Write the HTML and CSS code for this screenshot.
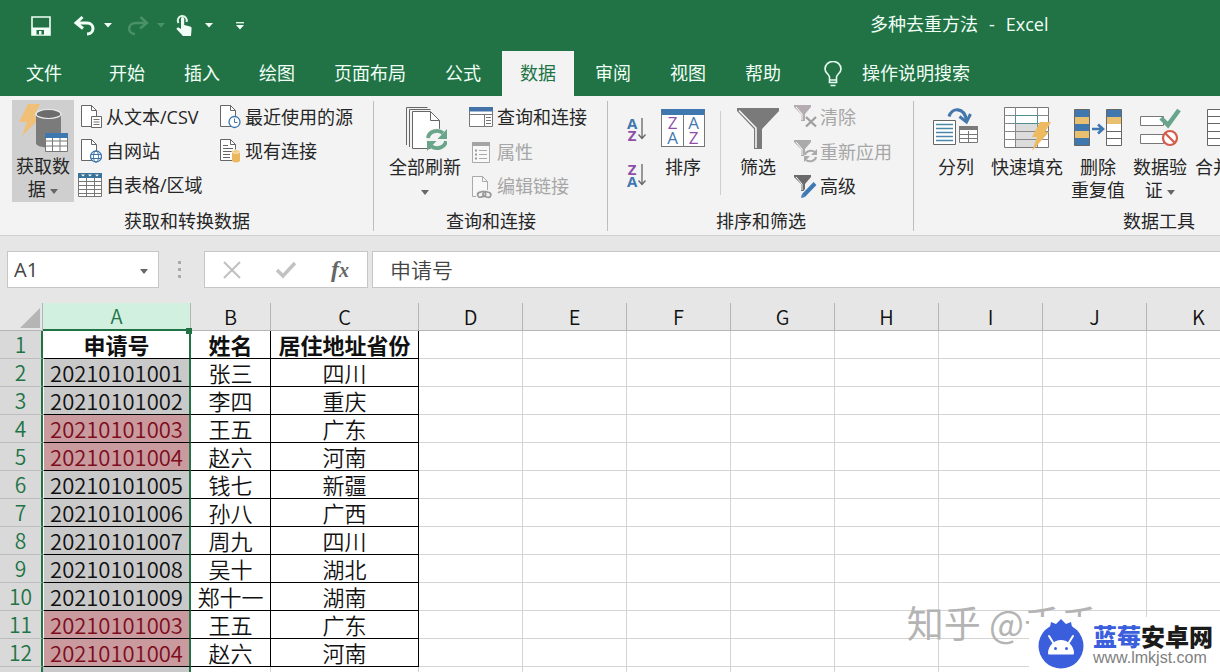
FILE: index.html
```html
<!DOCTYPE html>
<html lang="zh-CN">
<head>
<meta charset="utf-8">
<title>多种去重方法 - Excel</title>
<link rel="stylesheet" href="styles.css">
</head>
<body>
<div class="app">
  <header class="titlebar">
    <div class="quick">
      <button class="qbtn save" aria-label="保存"><svg width="20" height="20" viewBox="0 0 20 20"><path d="M1 1h18v18H1z" fill="none" stroke="#f1fff6" stroke-width="1.600"/><path d="M1 11.500h18V19H1z" fill="#f1fff6"/><path d="M5.500 14h7.500v4.500H5.500z" fill="#217346"/><path d="M8 15h2.500v3.500H8z" fill="#f1fff6"/></svg></button>
      <button class="qbtn undo" aria-label="撤消"><svg width="24" height="22" viewBox="0 0 24 22"><path d="M9.500 2L3 8l7 5.500M3.500 8H14c8 0 8 11 0 11" fill="none" stroke="#f1fff6" stroke-width="3"/></svg></button>
      <button class="qbtn drop" aria-label="撤消列表"><svg width="8" height="5" viewBox="0 0 8 5"><path d="M0 0h8L4 4.500z" fill="#f1fff6"/></svg></button>
      <button class="qbtn redo" aria-label="恢复" disabled><svg width="24" height="22" viewBox="0 0 24 22"><path d="M14.500 2L21 8l-7 5.500M20.500 8H10C1 8 1 19 9 19" fill="none" stroke="#4b9168" stroke-width="2.400"/></svg></button>
      <button class="qbtn drop" aria-label="恢复列表" disabled><svg width="8" height="5" viewBox="0 0 8 5"><path d="M0 0h8L4 4.500z" fill="#4b9168"/></svg></button>
      <button class="qbtn touch" aria-label="触摸/鼠标模式"><svg width="18" height="23" viewBox="0 0 18 23"><path d="M3.500 9A4.500 4.500 0 1 1 11.500 8" fill="none" stroke="#dff5e8" stroke-width="2"/><path d="M6 4.500a1.600 1.600 0 0 1 3.200 0V11l6 1.600q1.600.4 1.400 2L16 22H8L1.500 15q0-2 2-1.500L6 15z" fill="#f1fff6"/></svg></button>
      <button class="qbtn drop" aria-label="触摸选项"><svg width="8" height="5" viewBox="0 0 8 5"><path d="M0 0h8L4 4.500z" fill="#f1fff6"/></svg></button>
      <button class="qbtn more" aria-label="自定义快速访问工具栏"><svg width="8" height="8" viewBox="0 0 8 8"><path d="M0 .700h8" stroke="#f1fff6" stroke-width="1.300"/><path d="M0 3h8L4 7.500z" fill="#f1fff6"/></svg></button>
    </div>
    <h1 class="doc"><span>多种去重方法</span><span>-</span><span>Excel</span></h1>
  </header>

  <nav class="tabs">
    <button class="tab file">文件</button>
    <button class="tab">开始</button>
    <button class="tab">插入</button>
    <button class="tab">绘图</button>
    <button class="tab">页面布局</button>
    <button class="tab">公式</button>
    <button class="tab active">数据</button>
    <button class="tab">审阅</button>
    <button class="tab">视图</button>
    <button class="tab">帮助</button>
    <button class="tell"><svg width="18" height="26" viewBox="0 0 18 26"><path d="M5.500 19v-3C5 13 1 12 1 8a8 7.500 0 0 1 16 0c0 4-4 5-4.500 8v3zM5.500 19v2.500h7V19M6.500 24.500h5" fill="none" stroke="#e8fbf0" stroke-width="1.600"/></svg>操作说明搜索</button>
  </nav>

  <section class="ribbon">
    <div class="group g-get">
      <div class="tools">
        <button class="big pressed"><svg class="ico" width="50" height="50" viewBox="0 0 50 50"><path d="M10 0h12l-6 12h8L4 32l5-14H1z" fill="#f0bf78"/><path d="M18 10v29c0 6 25 6 25 0V10z" fill="#7b7b7b"/><ellipse cx="30.500" cy="10" rx="12.500" ry="4.500" fill="#6c6c6c" stroke="#eee" stroke-width="1.200"/><path d="M27.500 29.500h22v18h-22zM27.500 37h22M27.500 42h22M34.500 33v14M42 33v14" fill="#fff" stroke="#777"/><path d="M27 29h23v5H27z" fill="#3f78ae"/></svg><span>获取数<br>据 <i class="caret"></i></span></button>
        <div class="stack s1">
          <button class="small"><svg class="ico" width="24" height="26" viewBox="0 0 24 26"><path d="M3.500 1.500h10l5 5v16h-15z" fill="#fff" stroke="#666"/><path d="M13.500 1.500v5h5" fill="none" stroke="#666"/><path d="M13.500 12.500h10v11h-10z" fill="#fff" stroke="#666"/><path d="M15.500 15.500h6M15.500 18h6M15.500 20.500h6" stroke="#777"/></svg>从文本/CSV</button>
          <button class="small"><svg class="ico" width="24" height="26" viewBox="0 0 24 26"><path d="M3.500 1.500h10l5 5v16h-15z" fill="#fff" stroke="#666"/><path d="M13.500 1.500v5h5" fill="none" stroke="#666"/><circle cx="18" cy="18.500" r="5.500" fill="#fff" stroke="#3e75aa" stroke-width="1.300"/><ellipse cx="18" cy="18.500" rx="2.500" ry="5.500" fill="none" stroke="#3e75aa"/><path d="M13 16.500h10M13 20.500h10" stroke="#3e75aa"/></svg>自网站</button>
          <button class="small"><svg class="ico" width="24" height="26" viewBox="0 0 24 26"><path d="M.5 1.500h23v23H.5zM.5 9.500h23M.5 13.500h23M.5 17.500h23M.5 21.500h23M8.500 5v19M16.500 5v19" fill="#fff" stroke="#777"/><path d="M0 1h24v5H0z" fill="#39739a"/><path d="M3 2.500h4l-2 2zM10 2.500h4l-2 2zM17 2.500h4l-2 2z" fill="#fff"/></svg>自表格/区域</button>
        </div>
        <div class="stack">
          <button class="small"><svg class="ico" width="24" height="26" viewBox="0 0 24 26"><path d="M2.500 1.500h10l5 5v16h-15z" fill="#fff" stroke="#666"/><path d="M12.500 1.500v5h5" fill="none" stroke="#666"/><circle cx="16.500" cy="18" r="5.500" fill="#fff" stroke="#3e75aa" stroke-width="1.300"/><path d="M16.500 14.500v4h3" fill="none" stroke="#3e75aa"/></svg>最近使用的源</button>
          <button class="small"><svg class="ico" width="24" height="26" viewBox="0 0 24 26"><path d="M2.500 1.500h10l5 5v16h-15z" fill="#fff" stroke="#666"/><path d="M12.500 1.500v5h5M5 7.500h5M5 10.500h10M5 13.500h9M5 16.500h7M5 19.500h7" fill="none" stroke="#666"/><path d="M14 13.500v9c0 2.500 8 2.500 8 0v-9z" fill="#eab95f"/><ellipse cx="18" cy="13.500" rx="4" ry="1.800" fill="#f2ca80" stroke="#fff" stroke-width=".6"/></svg>现有连接</button>
        </div>
      </div>
      <div class="caption">获取和转换数据</div>
    </div>

    <div class="group g-query">
      <div class="tools">
        <button class="big"><svg class="ico" width="44" height="50" viewBox="0 0 44 50"><path d="M3.500 42V4.500h21M6.500 44V6.500h21" fill="none" stroke="#666"/><path d="M9.500 8.500h18l9 9v28h-27z" fill="#fff" stroke="#666"/><path d="M27.500 8.500v9h9" fill="none" stroke="#666"/><circle cx="34" cy="36.500" r="11" fill="#f3f3f3"/><path d="M25 35a9 8 0 0 1 15-5M43 38a9 8 0 0 1-15 5" fill="none" stroke="#69a58b" stroke-width="3.800"/><path d="M44 26v10h-9.500zM24 48V38h9.500z" fill="#69a58b"/></svg><span>全部刷新<br><i class="caret"></i></span></button>
        <div class="stack s2">
          <button class="small"><svg class="ico" width="24" height="26" viewBox="0 0 24 26"><path d="M.5 3.500h23v19H.5zM0 10.500h24M15.500 10v12M17 13.500h5M17 16.500h5M17 19.500h5" fill="#fff" stroke="#777"/><path d="M0 3h24v4.500H0z" fill="#4272a8"/></svg>查询和连接</button>
          <button class="small" disabled><svg class="ico" width="24" height="26" viewBox="0 0 24 26"><path d="M3.500 3.500h17v20h-17z" fill="#f8f8f8" stroke="#aaa"/><path d="M3 3h18v4H3z" fill="#a5a5a5"/><path d="M10 11.500h8M10 15.500h8M10 19.500h8" stroke="#aaa"/><path d="M6 10.500h2v2H6zM6 14.500h2v2H6zM6 18.500h2v2H6z" fill="#999"/></svg>属性</button>
          <button class="small" disabled><svg class="ico" width="24" height="26" viewBox="0 0 24 26"><path d="M3.500 2.500h10l5 5v15h-15z" fill="#f8f8f8" stroke="#aaa"/><path d="M13.500 2.500v5h5" fill="none" stroke="#aaa"/><path d="M7 16h16v8H7z" fill="#f3f3f3"/><g fill="none" stroke="#999" stroke-width="1.700"><rect x="8.500" y="18" width="8" height="5" rx="2.500" transform="rotate(-15 12 20)"/><rect x="14" y="18" width="8" height="5" rx="2.500" transform="rotate(15 18 20)"/></g></svg>编辑链接</button>
        </div>
      </div>
      <div class="caption">查询和连接</div>
    </div>

    <div class="group g-sort">
      <div class="tools">
        <div class="azs">
          <button class="az" aria-label="升序"><span class="letters"><b class="bl">A</b><b class="pu">Z</b></span><svg width="8" height="24" viewBox="0 0 8 24"><path d="M4 1v20M.5 17.500L4 21.500l3.500-4" fill="none" stroke="#666" stroke-width="1.300"/></svg></button>
          <button class="az" aria-label="降序"><span class="letters"><b class="pu">Z</b><b class="bl">A</b></span><svg width="8" height="24" viewBox="0 0 8 24"><path d="M4 1v20M.5 17.500L4 21.500l3.500-4" fill="none" stroke="#666" stroke-width="1.300"/></svg></button>
        </div>
        <button class="big sort"><span class="sorticon"><b class="pu">Z</b><b class="bl">A</b><b class="bl">A</b><b class="pu">Z</b></span><span>排序</span></button>
        <div class="rule"></div>
        <button class="big filter"><svg class="ico" width="42" height="50" viewBox="0 0 42 50"><path d="M0 5h42v3L25 26v20h-8V26L0 8z" fill="#7a7a7a"/><path d="M2 7.500l17 17.500v20" fill="none" stroke="#f5f5f5" stroke-width="1.600"/></svg><span>筛选</span></button>
        <div class="stack s3">
          <button class="small" disabled><svg class="ico" width="24" height="26" viewBox="0 0 24 26"><path d="M0 1h17v2l-6 7v7H7v-7L0 3z" fill="#b5abb0"/><path d="M2 3l6 7v6" fill="none" stroke="#fff"/><path d="M12 13l10 9.500M22 13l-10 9.500" stroke="#a0a0a0" stroke-width="2.400"/></svg>清除</button>
          <button class="small" disabled><svg class="ico" width="24" height="26" viewBox="0 0 24 26"><path d="M0 1h17v2l-6 7v7H7v-7L0 3z" fill="#aaa"/><path d="M2 3l6 7v6" fill="none" stroke="#fff"/><circle cx="17" cy="17" r="7" fill="#f3f3f3"/><path d="M11 16a6 5 0 0 1 10-3M22 18a6 5 0 0 1-10 3" fill="none" stroke="#aaa" stroke-width="2"/><path d="M23 10v6h-6zM10 23v-6h6z" fill="#aaa"/></svg>重新应用</button>
          <button class="small"><svg class="ico" width="24" height="26" viewBox="0 0 24 26"><path d="M0 1h17v2l-6 7v7H7v-7L0 3z" fill="#6b6b6b"/><path d="M2 3l6 7v6" fill="none" stroke="#fff"/><path d="M10 21L20 9" stroke="#f3f3f3" stroke-width="6"/><path d="M9.500 21.500L21 9.500" stroke="#3f79b3" stroke-width="4"/><path d="M7 24l1-4 3 3z" fill="#3f79b3"/></svg>高级</button>
        </div>
      </div>
      <div class="caption">排序和筛选</div>
    </div>

    <div class="group g-tools">
      <div class="tools">
        <button class="big"><svg class="ico" width="46" height="50" viewBox="0 0 46 50"><path d="M.5 17.500h22v24H.5z" fill="#fff" stroke="#666"/><path d="M3 21.500h17M3 25.500h17M3 29.500h17M3 33.500h17M3 37.500h17" stroke="#4c87a8" stroke-width="1.300"/><path d="M26.500 23.500h18v16h-18zM26 31.500h19M26 35.500h19M35.500 28v12" fill="#fff" stroke="#777"/><path d="M26 23h19v4H26z" fill="#7a7a7a"/><path d="M16 13.500C19 4 31 4 33.500 17" fill="none" stroke="#4477ab" stroke-width="3.200"/><path d="M26.500 13.500l7 5.500 4-8" fill="none" stroke="#4477ab" stroke-width="3"/></svg><span>分列</span></button>
        <button class="big wide"><svg class="ico" width="48" height="50" viewBox="0 0 48 50"><path d="M1.500 4.500h44v40h-44z" fill="#fff" stroke="#777"/><path d="M13 21h21v23H13z" fill="#dcdcdc"/><path d="M1 12.500h45M1 20.500h45M1 28.500h45M1 36.500h45M12.500 4v40M34.500 4v40" stroke="#888"/><path d="M12.500 12.500h22v8h-22z" fill="#fff" stroke="#4d8f93"/><path d="M37 19h11l-6 10h4L29 48l5-14h-5z" fill="#edba62"/></svg><span>快速填充</span></button>
        <button class="big"><svg class="ico" width="48" height="50" viewBox="0 0 48 50"><path d="M.5 6.500h15v36H.5z" fill="#3f78ae" stroke="#666"/><path d="M1 14h14v7H1zM1 28h14v7H1z" fill="#e8c06f"/><path d="M32.500 6.500h15v36h-15zM32 28.500h16M32 35.500h16" fill="#fff" stroke="#666"/><path d="M33 7h14v7H33z" fill="#3f78ae"/><path d="M33 14h14v7H33z" fill="#e8c06f"/><path d="M18 26h9M24 21.500l5 4.500-5 4.500" fill="none" stroke="#3f78ae" stroke-width="2.600"/></svg><span>删除<br>重复值</span></button>
        <button class="big"><svg class="ico" width="42" height="50" viewBox="0 0 42 50"><path d="M1.500 13.500h23v9h-23zM1.500 31.500h23v9h-23z" fill="#fff" stroke="#777"/><path d="M22 15l7 7L40 7" fill="none" stroke="#69a58b" stroke-width="4.500"/><circle cx="31" cy="35" r="7" fill="#fff" stroke="#d45d4c" stroke-width="2.200"/><path d="M26 30l10 10" stroke="#d45d4c" stroke-width="2.200"/></svg><span>数据验<br>证 <i class="caret"></i></span></button>
        <button class="big wide"><svg class="ico" width="48" height="50" viewBox="0 0 48 50"><path d="M.5 6.500h47v36H.5zM0 13.500h48M0 20.500h48M0 28.500h48M0 35.500h48" fill="#fff" stroke="#666"/></svg><span>合并计算</span></button>
      </div>
      <div class="caption">数据工具</div>
    </div>
  </section>

  <section class="formula">
    <div class="namebox">
      <input class="name" aria-label="名称框" value="A1">
      <button class="namedrop" aria-label="名称列表"><i class="caret"></i></button>
    </div>
    <div class="dots"><i></i><i></i><i></i></div>
    <div class="fxbox">
      <button aria-label="取消"><svg width="18" height="18" viewBox="0 0 18 18"><path d="M1 1l16 16M17 1L1 17" stroke="#c2c2c2" stroke-width="2.200"/></svg></button>
      <button aria-label="输入"><svg width="20" height="18" viewBox="0 0 20 18"><path d="M1 9l6 6L19 2" fill="none" stroke="#c2c2c2" stroke-width="3.600"/></svg></button>
      <button class="fx" aria-label="插入函数">f<small>x</small></button>
    </div>
    <input class="entry" aria-label="编辑栏" value="申请号">
  </section>

  <main class="sheet">
    <table class="grid">
      <colgroup><col class="c-head"><col class="c-wide"><col class="c-mid"><col class="c-wide"><col span="8" class="c-std"></colgroup>
      <thead><tr><th class="corner"><svg width="20" height="20" viewBox="0 0 20 20"><path d="M20 0v20H0z" fill="#b5b5b5"/></svg></th><th class="sel">A<i class="handle"></i></th><th>B</th><th>C</th><th>D</th><th>E</th><th>F</th><th>G</th><th>H</th><th>I</th><th>J</th><th>K</th></tr></thead>
      <tbody id="rows"></tbody>
    </table>
    <div class="mark">知乎 @千千</div>
    <div class="brand">
      <svg width="46" height="50" viewBox="0 0 46 50"><path d="M12 8l1-5 5 2 5-5 5 5 5-2 1 5z" fill="#3b5fdc"/><circle cx="23" cy="27" r="22.500" fill="#3b5fdc"/><path d="M10 34.500a13 13.500 0 0 1 26 0q0 1-1 1H11q-1 0-1-1z" fill="#fff"/><path d="M11 17l5 8M35 17l-5 8" stroke="#fff" stroke-width="2" stroke-linecap="round"/><circle cx="17.500" cy="29.500" r="1.500" fill="#3b5fdc"/><circle cx="28.500" cy="29.500" r="1.500" fill="#3b5fdc"/></svg>
      <div class="brandtext"><strong><em>蓝莓</em>安卓网</strong><span>www.lmkjst.com</span></div>
    </div>
  </main>
</div>
<script src="sheet.js"></script>
</body>
</html>
```
FILE: styles.css
```css
* { box-sizing: border-box; }
body { margin: 0; background: #fff; color: #262626; font: 18px/23px "Open Sans", "Noto Sans CJK SC", sans-serif; }
button { border: 0; padding: 0; margin: 0; background: none; color: inherit; font: inherit; }
svg { display: block; flex: none; }
.app { display: flex; flex-direction: column; height: 100vh; overflow: hidden; }

.titlebar { flex: none; display: flex; align-items: center; height: 51px; background: #217346; color: #f1fff6; }
.quick { display: flex; align-items: center; flex: 1; padding-left: 31px; }
.undo { margin-left: 22px; }
.redo { margin-left: 14px; }
.touch { margin-left: 10px; }
.drop { margin-left: 7px; }
.touch + .drop { margin-left: 12px; }
.redo + .drop { margin-left: 7px; }
.more { margin-left: 23px; }
.doc { flex: none; display: flex; gap: 11px; margin: 0; padding-bottom: 3px; width: 350px; font-size: 18px; font-weight: 400; white-space: nowrap; }

.tabs { flex: none; display: flex; gap: 3px; height: 45px; padding-left: 8px; background: #217346; color: #f1fff6; }
.tab { padding: 0 18px; height: 45px; white-space: nowrap; }
.file { margin-right: 8px; }
.active { background: #f3f3f3; color: #217346; }
.tell { display: flex; align-items: center; gap: 20px; margin-left: 22px; white-space: nowrap; }

.ribbon { flex: none; display: flex; height: 140px; padding-top: 3px; background: #f3f3f3; border-bottom: 1px solid #cfcfcf; overflow: hidden; }
.group { flex: none; position: relative; display: flex; flex-direction: column; }
.group::after { content: ""; position: absolute; right: 0; top: 2px; height: 130px; width: 1px; background: #bdbdbd; }
.g-get { width: 374px; }
.g-query { width: 234px; }
.g-sort { width: 306px; }
.g-tools { width: 490px; }
.tools { display: flex; height: 105px; }
.caption { margin-top: 6px; text-align: center; }
.big { display: flex; flex-direction: column; align-items: center; width: 54px; height: 103px; padding-top: 4px; line-height: 23px; white-space: nowrap; }
.big > span { margin-top: 3px; }
.wide { width: 72px; }
.pressed { width: 62px; margin-left: 12px; background: #cfcfcf; }
.g-get .big { margin-top: 1px; height: 102px; }
.g-get .big > span { margin-top: 1px; }
.caret { display: inline-block; vertical-align: middle; border: 4px solid transparent; border-top: 5px solid #666; border-bottom: 0; }
.stack { display: flex; flex-direction: column; align-items: flex-start; }
.small { display: flex; align-items: center; gap: 4px; height: 35px; white-space: nowrap; }
.small:disabled { color: #a6a6a6; }
.g-get .stack { padding-top: 1px; }
.g-get .small { height: 34px; }
.s1 { width: 144px; padding-left: 4px; }
.g-get .stack + .stack .small { gap: 3px; }
.g-query .big { width: 72px; margin-left: 15px; }
.s2, .s3 { padding-top: 1px; }
.s2 { margin-left: 8px; }
.azs { display: flex; flex-direction: column; gap: 22px; padding: 18px 0 0 19px; width: 42px; }
.az { display: flex; align-items: center; gap: 1px; height: 24px; }
.letters { display: flex; flex-direction: column; font: 15px/12px "Open Sans", sans-serif; }
.bl { color: #3f78ae; }
.pu { color: #8e4fa8; }
.sort { width: 66px; }
.sorticon { display: grid; grid-template: 15px 15px / 21px 21px; grid-auto-flow: column; place-items: center; width: 44px; height: 38px; border: 1px solid #777; border-top: 6px solid #3f78ae; background: linear-gradient(#777, #777) center / 1px 100% no-repeat #fff; font: 17px/17px "Open Sans", sans-serif; }
.sorticon b { font-weight: 400; }
.big > .sorticon { margin: 6px 0; }
.rule { width: 1px; height: 84px; margin: 12px 10px 0 4px; background: #cfcfcf; }
.s3 { margin-left: 9px; }
.s3 .small { gap: 2px; }
.g-tools .tools { gap: 8px; padding-left: 15px; }

.formula { flex: none; display: flex; height: 67px; padding: 15px 0 15px 7px; background: #e6e6e6; }
.namebox, .fxbox { display: flex; align-items: center; border: 1px solid #c6c6c6; background: #fff; }
.namebox { width: 152px; }
.name, .entry { min-width: 0; border: 0; background: #fff; color: #444; font: 20px/28px "Open Sans", "Noto Sans CJK SC", sans-serif; }
.name { flex: 1; padding: 0 6px; }
.namedrop { width: 28px; }
.dots { display: flex; flex-direction: column; justify-content: center; gap: 4px; width: 45px; padding-left: 19px; }
.dots i { width: 3px; height: 3px; background: #aaa; }
.fxbox { justify-content: space-between; width: 164px; padding: 0 18px; }
.fx { font: italic bold 24px/30px "Liberation Serif", serif; color: #666; }
.fx small { font-size: 20px; }
.entry { flex: 1; margin-left: 4px; padding: 0 17px; border: 1px solid #c6c6c6; border-right: 0; font-size: 21px; font-weight: 350; }

.sheet { flex: 1; min-height: 0; position: relative; overflow: hidden; background: #fff; }
.grid { width: 1251px; table-layout: fixed; border-collapse: separate; border-spacing: 0; font: 22px/27px "Noto Sans CJK SC", sans-serif; }
.c-head { width: 43px; }
.c-wide { width: 148px; }
.c-mid { width: 80px; }
.c-std { width: 104px; }
.grid th, .grid td { height: 28px; padding: 0; border-right: 1px solid #d4d4d4; border-bottom: 1px solid #d4d4d4; text-align: center; font-weight: 350; white-space: nowrap; color: #111; }
.grid thead th { background: #e6e6e6; border-color: #b5b5b5; font-size: 20px; }
.grid .corner svg { margin: 4px 2px 2px auto; }
.grid thead .sel { position: relative; background: #d2f0df; color: #217346; border-bottom: 2px solid #217346; line-height: 26px; }
.handle { position: absolute; right: -2px; bottom: -5px; width: 6px; height: 6px; background: #217346; }
.grid tbody th { background: #d9d9d9; color: #217346; border-right: 2px solid #217346; border-bottom-color: #bdbdbd; font-size: 21px; }
.grid td.data { border-color: #000; }
.grid td.key { background: #c9c9c9; border-right: 2px solid #217346; border-left: 1px solid #fff; }
.grid td.dup { background: #c99a9e; color: #7d0d1c; }
.grid td.blank { background: #c9c9c9; border-right: 2px solid #217346; }
.grid tr.title td.data { background: #fff; font-weight: 700; }

.mark { position: absolute; right: 122px; bottom: 28px; color: #b4b4b4; font: 37px/44px "Noto Sans CJK SC", sans-serif; white-space: nowrap; }
.brand { position: absolute; right: 0; bottom: 0; display: flex; align-items: center; gap: 9px; padding: 2px 7px 3px 9px; background: #fff; }
.brandtext { display: flex; flex-direction: column; }
.brandtext strong { font: 900 24px/27px "Noto Sans CJK SC", sans-serif; color: #1b1b1b; }
.brandtext em { font-style: normal; color: #3b5fdc; }
.brandtext span { font: 16px/17px "Liberation Sans", sans-serif; color: #808080; }
```
FILE: sheet.js
```js
const data = [
  ["申请号", "姓名", "居住地址省份"],
  ["20210101001", "张三", "四川"],
  ["20210101002", "李四", "重庆"],
  ["20210101003", "王五", "广东"],
  ["20210101004", "赵六", "河南"],
  ["20210101005", "钱七", "新疆"],
  ["20210101006", "孙八", "广西"],
  ["20210101007", "周九", "四川"],
  ["20210101008", "吴十", "湖北"],
  ["20210101009", "郑十一", "湖南"],
  ["20210101003", "王五", "广东"],
  ["20210101004", "赵六", "河南"]
];
const counts = {};
data.forEach(r => { counts[r[0]] = (counts[r[0]] || 0) + 1; });
const body = document.getElementById("rows");
const add = (row, tag, text, cls) => {
  const cell = document.createElement(tag);
  cell.textContent = text;
  if (cls) cell.className = cls;
  row.append(cell);
};
for (let i = 0; i <= data.length; i++) {
  const row = document.createElement("tr");
  const rec = data[i];
  if (i === 0) row.className = "title";
  add(row, "th", rec ? i + 1 : "");
  for (let c = 0; c < 11; c++) {
    if (rec && c < 3) {
      const dup = c === 0 && counts[rec[0]] > 1;
      add(row, "td", rec[c], "data" + (c === 0 ? " key" : "") + (dup ? " dup" : ""));
    } else {
      add(row, "td", "", c === 0 ? "blank" : "");
    }
  }
  body.append(row);
}
```
